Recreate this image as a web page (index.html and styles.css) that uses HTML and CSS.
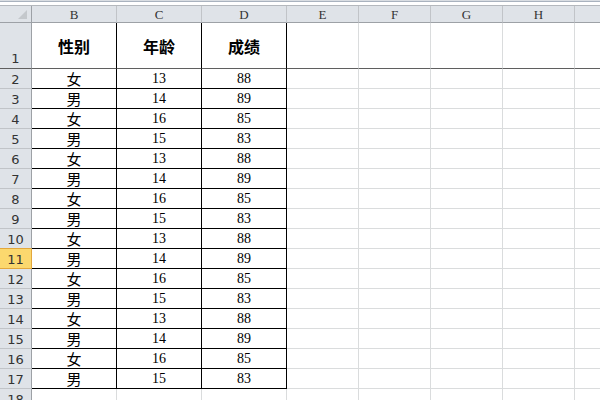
FILE: index.html
```html
<!DOCTYPE html>
<html lang="zh-CN">
<head>
<meta charset="utf-8">
<title>Sheet</title>
<link rel="stylesheet" href="styles.css">
</head>
<body>
<div class="strip"></div>
<div class="sheet">
  <div class="ch corner"><span class="tri"></span></div>
  <div class="ch">B</div><div class="ch">C</div><div class="ch">D</div><div class="ch">E</div><div class="ch">F</div><div class="ch">G</div><div class="ch">H</div><div class="ch last"></div>

  <div class="rh first frz">1</div>
  <div class="c t th frz">性别</div><div class="c t th frz">年龄</div><div class="c t th frz">成绩</div>
  <div class="c e frz"></div><div class="c e frz"></div><div class="c e frz"></div><div class="c e frz"></div><div class="c e last frz"></div>

  <div class="rh">2</div><div class="c t cj">女</div><div class="c t n">13</div><div class="c t n">88</div><div class="c e"></div><div class="c e"></div><div class="c e"></div><div class="c e"></div><div class="c e last"></div>
  <div class="rh">3</div><div class="c t cj">男</div><div class="c t n">14</div><div class="c t n">89</div><div class="c e"></div><div class="c e"></div><div class="c e"></div><div class="c e"></div><div class="c e last"></div>
  <div class="rh">4</div><div class="c t cj">女</div><div class="c t n">16</div><div class="c t n">85</div><div class="c e"></div><div class="c e"></div><div class="c e"></div><div class="c e"></div><div class="c e last"></div>
  <div class="rh">5</div><div class="c t cj">男</div><div class="c t n">15</div><div class="c t n">83</div><div class="c e"></div><div class="c e"></div><div class="c e"></div><div class="c e"></div><div class="c e last"></div>
  <div class="rh">6</div><div class="c t cj">女</div><div class="c t n">13</div><div class="c t n">88</div><div class="c e"></div><div class="c e"></div><div class="c e"></div><div class="c e"></div><div class="c e last"></div>
  <div class="rh">7</div><div class="c t cj">男</div><div class="c t n">14</div><div class="c t n">89</div><div class="c e"></div><div class="c e"></div><div class="c e"></div><div class="c e"></div><div class="c e last"></div>
  <div class="rh">8</div><div class="c t cj">女</div><div class="c t n">16</div><div class="c t n">85</div><div class="c e"></div><div class="c e"></div><div class="c e"></div><div class="c e"></div><div class="c e last"></div>
  <div class="rh">9</div><div class="c t cj">男</div><div class="c t n">15</div><div class="c t n">83</div><div class="c e"></div><div class="c e"></div><div class="c e"></div><div class="c e"></div><div class="c e last"></div>
  <div class="rh pre-sel">10</div><div class="c t cj">女</div><div class="c t n">13</div><div class="c t n">88</div><div class="c e"></div><div class="c e"></div><div class="c e"></div><div class="c e"></div><div class="c e last"></div>
  <div class="rh sel">11</div><div class="c t cj">男</div><div class="c t n">14</div><div class="c t n">89</div><div class="c e"></div><div class="c e"></div><div class="c e"></div><div class="c e"></div><div class="c e last"></div>
  <div class="rh">12</div><div class="c t cj">女</div><div class="c t n">16</div><div class="c t n">85</div><div class="c e"></div><div class="c e"></div><div class="c e"></div><div class="c e"></div><div class="c e last"></div>
  <div class="rh">13</div><div class="c t cj">男</div><div class="c t n">15</div><div class="c t n">83</div><div class="c e"></div><div class="c e"></div><div class="c e"></div><div class="c e"></div><div class="c e last"></div>
  <div class="rh">14</div><div class="c t cj">女</div><div class="c t n">13</div><div class="c t n">88</div><div class="c e"></div><div class="c e"></div><div class="c e"></div><div class="c e"></div><div class="c e last"></div>
  <div class="rh">15</div><div class="c t cj">男</div><div class="c t n">14</div><div class="c t n">89</div><div class="c e"></div><div class="c e"></div><div class="c e"></div><div class="c e"></div><div class="c e last"></div>
  <div class="rh">16</div><div class="c t cj">女</div><div class="c t n">16</div><div class="c t n">85</div><div class="c e"></div><div class="c e"></div><div class="c e"></div><div class="c e"></div><div class="c e last"></div>
  <div class="rh">17</div><div class="c t cj">男</div><div class="c t n">15</div><div class="c t n">83</div><div class="c e"></div><div class="c e"></div><div class="c e"></div><div class="c e"></div><div class="c e last"></div>

  <div class="rh">18</div><div class="c e"></div><div class="c e"></div><div class="c e"></div><div class="c e"></div><div class="c e"></div><div class="c e"></div><div class="c e"></div><div class="c e last"></div>
</div>
</body>
</html>
```

FILE: styles.css
```css
* { box-sizing: border-box; }
html, body {
  margin: 0;
  padding: 0;
  width: 600px;
  height: 400px;
  overflow: hidden;
  background: #fff;
}
.strip {
  height: 6px;
  background: linear-gradient(to bottom,
    #d9dde2 0, #d9dde2 1px,
    #a9b2be 1px, #a9b2be 2px,
    #ffffff 2px, #ffffff 5px,
    #b4b8bd 5px, #b4b8bd 6px);
}
.sheet {
  display: grid;
  grid-template-columns: 32px 85px 85px 85px 72px 72px 72px 72px 1fr;
  grid-template-rows: 17px 46px repeat(16, 20px) 20px;
}
.ch {
  background: #dfe3e8;
  border-right: 1px solid #c1c4c8;
  border-bottom: 1px solid #9da1a6;
  display: flex;
  align-items: center;
  justify-content: center;
  font-family: "Liberation Serif", serif;
  font-size: 13px;
  color: #333;
  line-height: 1;
  padding-top: 1px;
}
.ch.last { border-right: none; }
.corner {
  position: relative;
  border-right-color: #9da1a6;
}
.tri {
  position: absolute;
  right: 4px;
  bottom: 3px;
  width: 0;
  height: 0;
  border-style: solid;
  border-width: 0 0 9px 9px;
  border-color: transparent transparent #c4c8cc transparent;
}
.rh {
  background: #dfe3e8;
  border-right: 1px solid #9da1a6;
  border-bottom: 1px solid #c1c4c8;
  display: flex;
  align-items: center;
  justify-content: center;
  font-family: "DejaVu Sans", sans-serif;
  font-size: 13px;
  color: #333;
  padding-top: 1px;
}
.rh.first {
  align-items: flex-end;
  padding-bottom: 2px;
}
.rh.pre-sel { border-bottom-color: #e3a73c; }
.rh.sel {
  background: #fbd86e;
  border-right-color: #e3a73c;
  border-bottom-color: #e3a73c;
}
.c {
  border-right: 1px solid #dadcdd;
  border-bottom: 1px solid #dadcdd;
  display: flex;
  align-items: center;
  justify-content: center;
  color: #000;
}
.c.last { border-right: none; }
.t {
  border-right-color: #000;
  border-bottom-color: #000;
}
.frz { border-bottom-color: #5f5f5f !important; }
.th {
  font-family: "Noto Sans CJK SC", sans-serif;
  font-weight: 700;
  font-size: 16px;
  padding-top: 1px;
}
.cj {
  font-family: "Noto Sans CJK SC", sans-serif;
  font-size: 15px;
  line-height: 1;
}
.n {
  font-family: "Liberation Serif", serif;
  font-size: 14px;
  line-height: 1;
  padding-top: 1px;
}
```
